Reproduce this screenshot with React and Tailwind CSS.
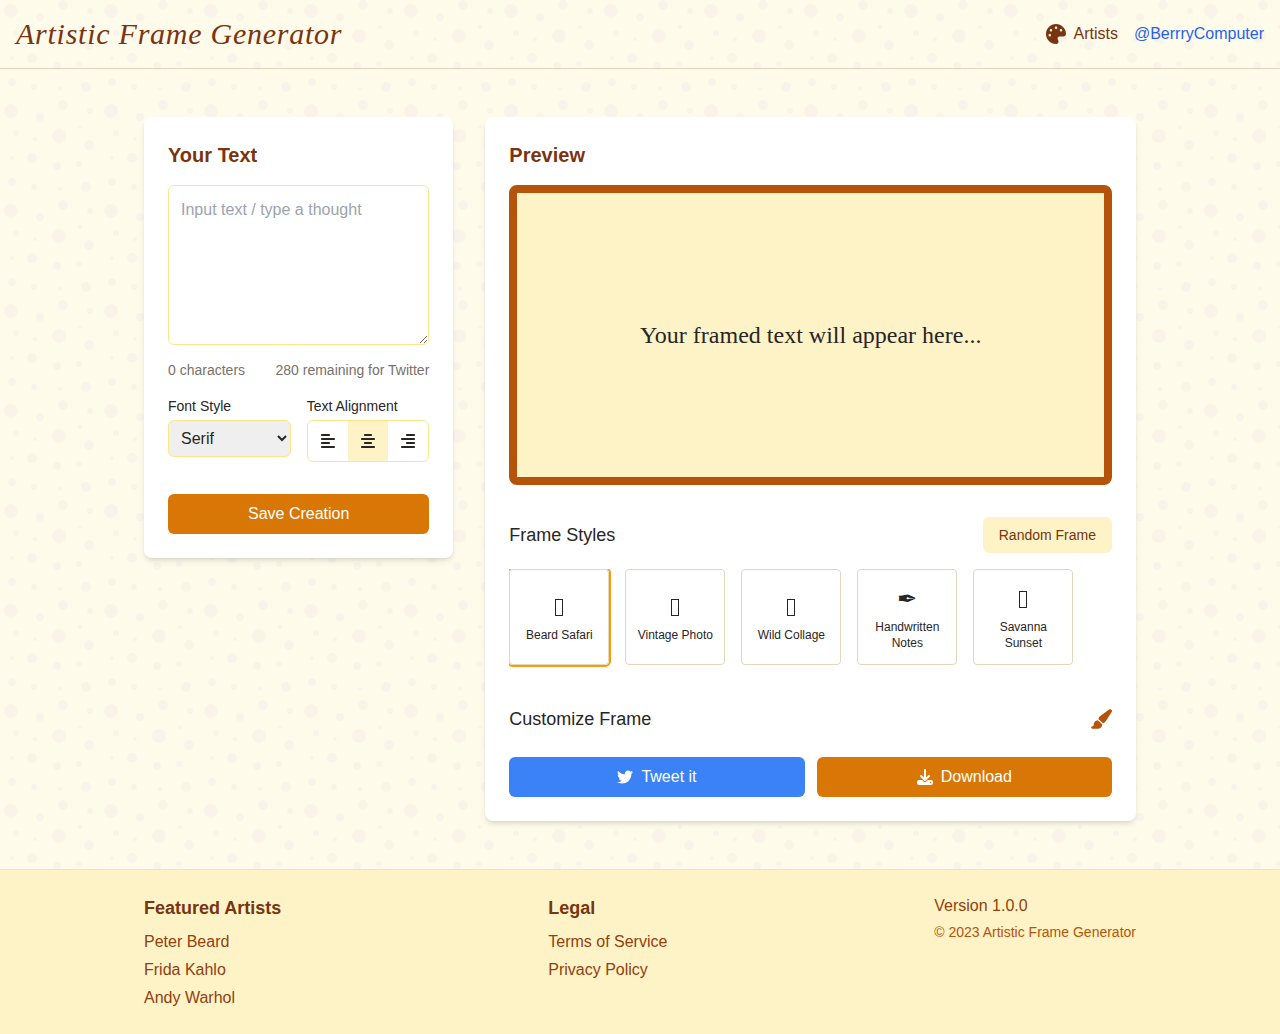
import React, { useState } from 'react';
import {
  FaAlignCenter,
  FaAlignLeft,
  FaAlignRight,
  FaDownload,
  FaPaintbrush,
  FaPalette,
  FaTwitter,
} from 'react-icons/fa6';

const TWEET_LIMIT = 280;

// frames without an icon show an empty box
const FRAMES = [
  { id: 'beard', name: 'Beard Safari' },
  { id: 'vintage', name: 'Vintage Photo' },
  { id: 'collage', name: 'Wild Collage' },
  { id: 'notes', name: 'Handwritten Notes', icon: '✒' },
  { id: 'sunset', name: 'Savanna Sunset' },
];

const ALIGNMENTS = [
  { id: 'left', Icon: FaAlignLeft, textClass: 'text-left' },
  { id: 'center', Icon: FaAlignCenter, textClass: 'text-center' },
  { id: 'right', Icon: FaAlignRight, textClass: 'text-right' },
];

const FONTS = [
  { id: 'serif', label: 'Serif', fontClass: "font-['Liberation_Serif',serif]" },
  { id: 'sans', label: 'Sans Serif', fontClass: "font-['Liberation_Sans',sans-serif]" },
  { id: 'mono', label: 'Monospace', fontClass: "font-['Liberation_Mono',monospace]" },
];

// [cx, cy, r] inside a 100x100 tile
const BUBBLES = [
  [11, 11, 7], [59, 36, 7],
  [63, 5, 5], [86, 87, 5], [32, 58, 5], [89, 45, 5],
  [12, 82, 4], [40, 17, 4], [57, 66, 4],
  [16, 33, 3], [79, 64, 3], [34, 87, 3], [90, 11, 3],
  [80, 27, 2], [60, 89, 2], [35, 39, 2], [12, 58, 2],
];

function BubbleBackground() {
  return (
    <svg className="absolute inset-0 w-full h-full" aria-hidden="true">
      <defs>
        <pattern id="bubbles" width="100" height="100" patternUnits="userSpaceOnUse">
          {BUBBLES.map(([cx, cy, r]) => (
            <circle key={`${cx}-${cy}`} cx={cx} cy={cy} r={r} fill="#a07ac0" fillOpacity="0.06" />
          ))}
        </pattern>
      </defs>
      <rect width="100%" height="100%" fill="url(#bubbles)" />
    </svg>
  );
}

function Header() {
  return (
    <header className="relative flex items-center justify-between p-4 border-b border-[#78350f]/20">
      <h1 className="font-['Liberation_Serif',serif] italic text-3xl tracking-wide text-[#78350f]">
        Artistic Frame Generator
      </h1>
      <nav className="flex items-center gap-4">
        <a href="#artists" className="flex items-center gap-2 text-[#78350f]">
          <FaPalette className="w-5 h-5" />
          Artists
        </a>
        <a href="#berrry" className="text-[#2563eb] hover:underline">@BerrryComputer</a>
      </nav>
    </header>
  );
}

function TextPanel({ text, setText, font, setFont, align, setAlign }) {
  return (
    <section className="bg-white rounded-lg shadow-md p-6">
      <h2 className="text-xl font-bold text-[#78350f] mb-4">Your Text</h2>
      <div>
        <textarea
          aria-label="Your Text"
          className="w-full h-40 p-3 border border-[#fde68a] rounded-md placeholder:text-[#9ca3af]"
          placeholder="Input text / type a thought"
          value={text}
          onChange={(e) => setText(e.target.value)}
        />
        <div className="flex justify-between mt-2 text-sm text-[#78716c]">
          <span>{text.length} characters</span>
          <span>{TWEET_LIMIT - text.length} remaining for Twitter</span>
        </div>
      </div>

      <div className="grid grid-cols-2 gap-4 mt-4">
        <div>
          <label htmlFor="font-style" className="block text-sm mb-1">Font Style</label>
          <select
            id="font-style"
            className="w-full p-2 bg-[#efefef] border border-[#fde68a] rounded-md"
            value={font}
            onChange={(e) => setFont(e.target.value)}
          >
            {FONTS.map((f) => (
              <option key={f.id} value={f.id}>{f.label}</option>
            ))}
          </select>
        </div>
        <div>
          <span id="align-label" className="block text-sm mb-1">Text Alignment</span>
          <div
            role="group"
            aria-labelledby="align-label"
            className="flex border border-[#fde68a] rounded-md overflow-hidden"
          >
            {ALIGNMENTS.map(({ id, Icon }) => (
              <button
                key={id}
                type="button"
                aria-label={id}
                aria-pressed={align === id}
                onClick={() => setAlign(id)}
                className={`flex-1 h-10 flex items-center justify-center ${align === id ? 'bg-[#fef3c7]' : ''}`}
              >
                <Icon className="w-[14px] h-4" />
              </button>
            ))}
          </div>
        </div>
      </div>

      <button type="button" className="w-full mt-8 py-2 bg-[#d97706] text-white rounded-md">
        Save Creation
      </button>
    </section>
  );
}

function PreviewPanel({ text, fontClass, textClass }) {
  const [frame, setFrame] = useState('beard');

  const pickRandom = () => {
    setFrame(FRAMES[Math.floor(Math.random() * FRAMES.length)].id);
  };

  return (
    <section className="md:col-span-2 min-w-0 bg-white rounded-lg shadow-md p-6">
      <h2 className="text-xl font-bold text-[#78350f] mb-4">Preview</h2>
      <div className="min-h-[300px] flex items-center justify-center p-8 bg-[#fef3c7] border-8 border-[#b45309] rounded-lg">
        <p className={`text-2xl ${fontClass} ${textClass}`}>
          {text || 'Your framed text will appear here...'}
        </p>
      </div>

      <div className="flex items-center justify-between mt-8 mb-4">
        <h3 className="text-lg">Frame Styles</h3>
        <button
          type="button"
          onClick={pickRandom}
          className="px-4 py-2 text-sm bg-[#fef3c7] text-[#78350f] rounded-md"
        >
          Random Frame
        </button>
      </div>
      <div className="flex gap-4 overflow-x-auto pb-4">
        {FRAMES.map((f) => (
          <button
            key={f.id}
            type="button"
            onClick={() => setFrame(f.id)}
            className={`w-[100px] h-24 shrink-0 flex flex-col items-center justify-center px-2 border border-[#e6d5b8] rounded ${frame === f.id ? 'ring-2 ring-[#f59e0b]' : ''}`}
          >
            <span className="h-8 flex items-center text-2xl mb-1" aria-hidden="true">
              {f.icon || <span className="w-2 h-[17px] border border-[#292524]" />}
            </span>
            <span className="text-xs">{f.name}</span>
          </button>
        ))}
      </div>

      <div className="flex items-center justify-between mt-6">
        <h3 className="text-lg">Customize Frame</h3>
        <button type="button" aria-label="Customize frame" className="text-[#b45309]">
          <FaPaintbrush className="w-[22px] h-5" />
        </button>
      </div>

      <div className="grid grid-cols-2 gap-3 mt-6">
        <button type="button" className="flex items-center justify-center gap-2 py-2 bg-[#3b82f6] text-white rounded-md">
          <FaTwitter />
          Tweet it
        </button>
        <button type="button" className="flex items-center justify-center gap-2 py-2 bg-[#d97706] text-white rounded-md">
          <FaDownload />
          Download
        </button>
      </div>
    </section>
  );
}

function FooterLinks({ title, links }) {
  return (
    <div>
      <h3 className="text-lg font-bold text-[#78350f] mb-2">{title}</h3>
      <ul className="space-y-1">
        {links.map((link) => (
          <li key={link}>
            <a href="#footer" className="text-[#92400e] hover:underline">{link}</a>
          </li>
        ))}
      </ul>
    </div>
  );
}

function Footer() {
  return (
    <footer id="footer" className="relative bg-[#fef3c7] border-t border-[#fde68a] py-6">
      <div className="max-w-5xl mx-auto px-4 flex flex-wrap justify-between">
        <FooterLinks title="Featured Artists" links={['Peter Beard', 'Frida Kahlo', 'Andy Warhol']} />
        <FooterLinks title="Legal" links={['Terms of Service', 'Privacy Policy']} />
        <div>
          <p className="text-[#92400e]">Version 1.0.0</p>
          <p className="text-sm text-[#b45309] mt-1">© 2023 Artistic Frame Generator</p>
        </div>
      </div>
    </footer>
  );
}

function App() {
  const [text, setText] = useState('');
  const [font, setFont] = useState('serif');
  const [align, setAlign] = useState('center');

  const { fontClass } = FONTS.find((f) => f.id === font);
  const { textClass } = ALIGNMENTS.find((a) => a.id === align);

  return (
    <div className="relative min-h-screen bg-[#fffbeb] text-[#292524] font-['Liberation_Sans',sans-serif]">
      <BubbleBackground />
      <Header />
      <main className="relative max-w-5xl mx-auto px-4 py-12 grid md:grid-cols-3 items-start gap-8">
        <TextPanel
          text={text}
          setText={setText}
          font={font}
          setFont={setFont}
          align={align}
          setAlign={setAlign}
        />
        <PreviewPanel text={text} fontClass={fontClass} textClass={textClass} />
      </main>
      <Footer />
    </div>
  );
}

export default App;
